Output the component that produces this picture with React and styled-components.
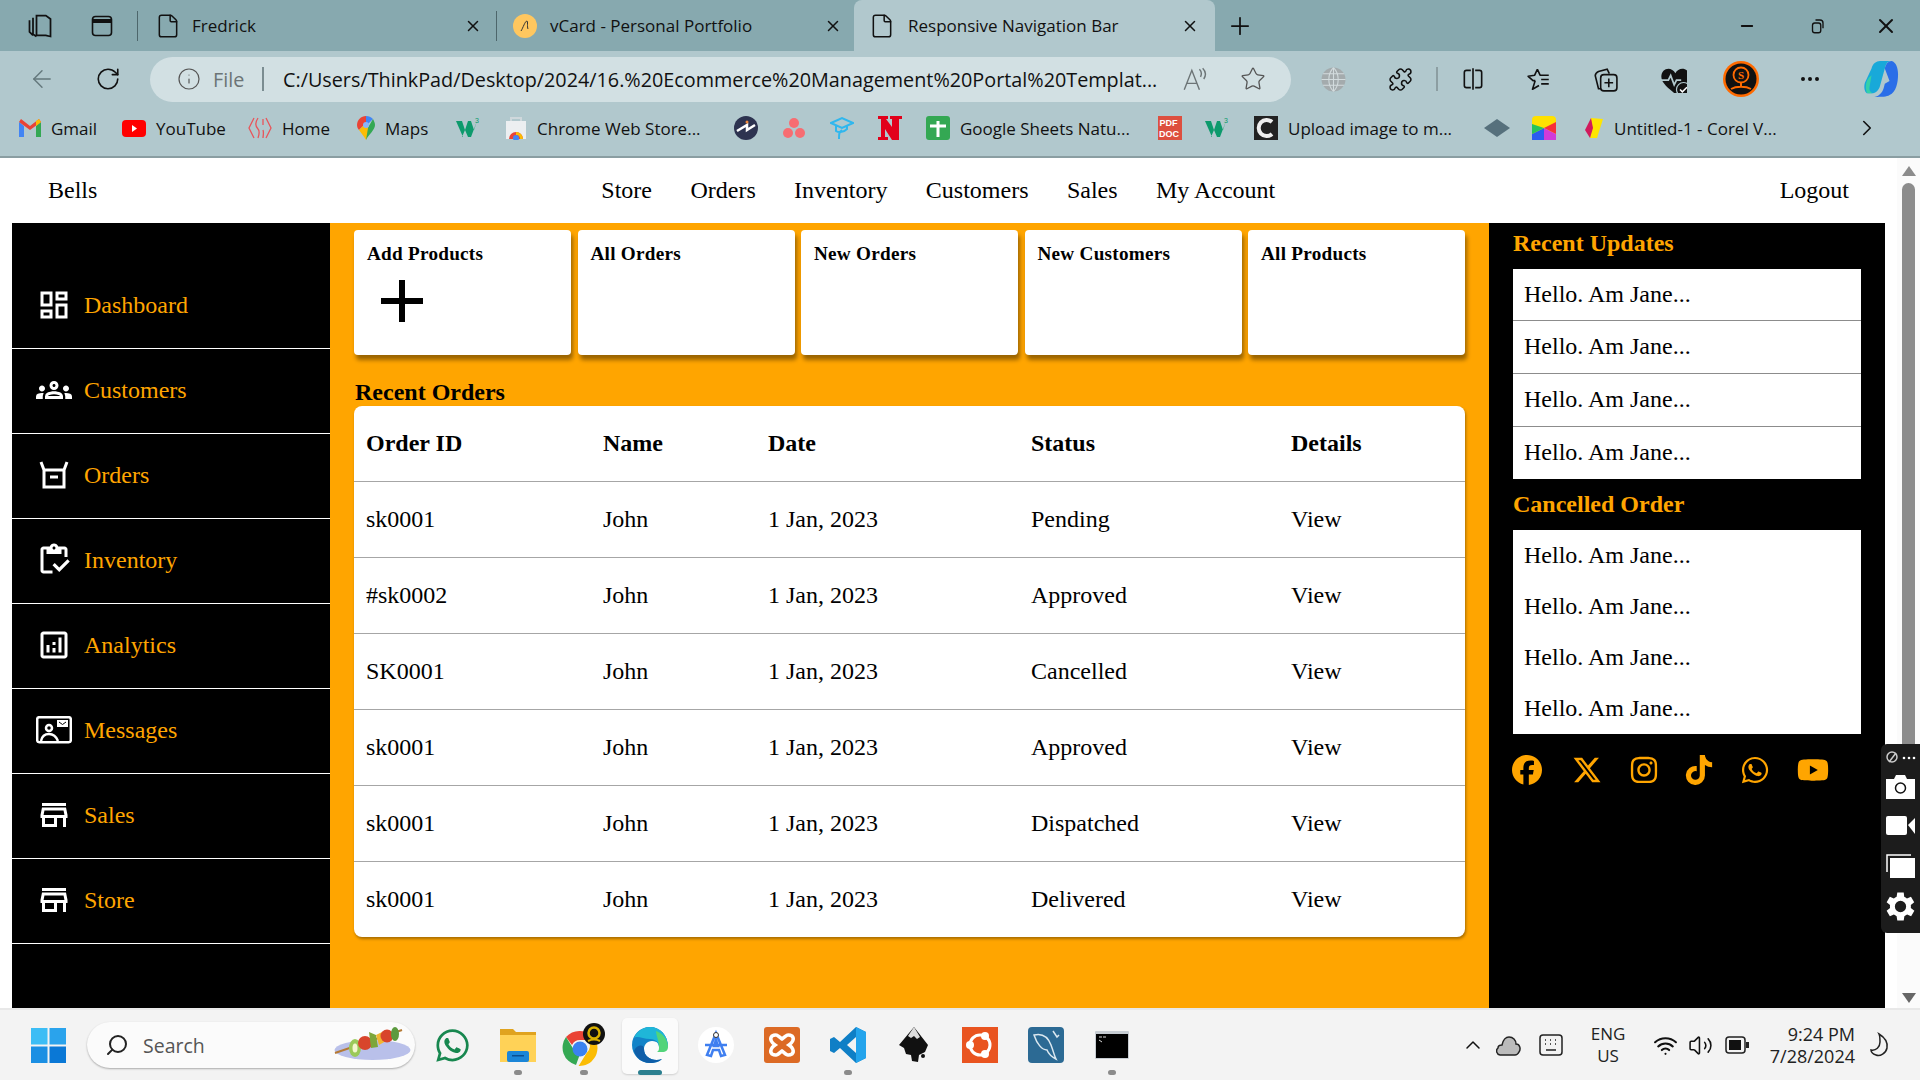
import React from "react";
import styled, { createGlobalStyle } from "styled-components";
import {
  MdOutlineDashboard,
  MdOutlineGroups,
  MdOutlineInventory,
  MdOutlineAnalytics,
  MdOutlineStore,
} from "react-icons/md";
import {
  FaFacebook,
  FaXTwitter,
  FaInstagram,
  FaTiktok,
  FaWhatsapp,
  FaYoutube,
} from "react-icons/fa6";
import {
  File,
  X,
  Plus,
  Minus,
  ArrowLeft,
  RotateCw,
  Info,
  Star,
  Puzzle,
  ChevronRight,
  ChevronUp,
  Search,
  Wifi,
  Volume2,
  Ellipsis,
} from "lucide-react";

const GlobalStyle = createGlobalStyle`
  html, body {
    margin: 0;
    height: 100%;
    overflow: hidden;
  }
  * {
    box-sizing: border-box;
  }
`;

const Window = styled.div`
  height: 1080px;
  display: flex;
  flex-direction: column;
  font-family: "Open Sans", "Noto Sans", sans-serif;
  color: #111;
`;

const TabStrip = styled.div`
  height: 51px;
  flex: none;
  display: flex;
  align-items: stretch;
  background: #87a9af;
`;

const Cell = styled.div`
  width: ${(p) => p.$w}px;
  margin-left: ${(p) => p.$ml || 0}px;
  flex: none;
  display: flex;
  align-items: center;
  justify-content: center;
  position: relative;
`;

const Divider = styled.div`
  width: 1px;
  height: 30px;
  align-self: center;
  flex: none;
  margin-left: ${(p) => p.$ml || 0}px;
  background: #4d666b;
`;

const Tab = styled.div`
  width: ${(p) => p.$w}px;
  margin-left: ${(p) => p.$ml || 0}px;
  flex: none;
  display: flex;
  align-items: center;
  padding: 0 ${(p) => p.$pr}px 0 15px;
  gap: ${(p) => p.$gap}px;
  font-size: 17px;
  background: ${(p) => (p.$active ? "#b1c8cd" : "transparent")};
  border-radius: ${(p) => (p.$active ? "8px 8px 0 0" : "0")};
`;

const TabTitle = styled.span`
  flex: 1;
  white-space: nowrap;
`;

const WindowControls = styled.div`
  margin-left: auto;
  display: flex;
`;

const Toolbar = styled.div`
  height: 56px;
  flex: none;
  display: flex;
  align-items: center;
  background: #b1c8cd;
`;

const AddressBar = styled.div`
  width: 1141px;
  height: 45px;
  margin-left: 18px;
  flex: none;
  display: flex;
  align-items: center;
  background: #d2e0e3;
  border-radius: 23px;
  font-size: 19.8px;
`;

const FileLabel = styled.span`
  width: 33px;
  color: #6c7476;
  margin-left: 2px;
`;

const UrlText = styled.span`
  width: 880px;
  margin-left: 19px;
  white-space: nowrap;
  overflow: hidden;
`;

const BarSep = styled.div`
  width: 2px;
  height: 24px;
  margin-left: ${(p) => p.$ml || 0}px;
  background: ${(p) => p.$color || "#7b8d91"};
  flex: none;
`;

const BookmarkBar = styled.div`
  height: 51px;
  flex: none;
  display: flex;
  align-items: center;
  padding: 0 0 7px 19px;
  background: #b1c8cd;
  border-bottom: 2px solid #8a9ea2;
  font-size: 17px;
`;

const Bookmark = styled.div`
  width: ${(p) => p.$w}px;
  flex: none;
  display: flex;
  align-items: center;
  gap: 10px;
  white-space: nowrap;
`;

const Page = styled.div`
  flex: 1;
  min-height: 0;
  display: flex;
  position: relative;
  background: #fff;
`;

const PageBody = styled.div`
  flex: 1;
  min-width: 0;
  display: flex;
  flex-direction: column;
  font-family: "Liberation Serif", "Times New Roman", serif;
  font-size: 24px;
`;

const NavBar = styled.nav`
  height: 65px;
  flex: none;
  display: flex;
  align-items: center;
  padding: 0 48px;
  color: #000;
`;

const NavLinks = styled.div`
  display: flex;
  gap: 38.4px;
  margin-left: 504px;
`;

const NavRight = styled.div`
  margin-left: auto;
`;

const Columns = styled.div`
  flex: 1;
  min-height: 0;
  display: flex;
  padding: 0 12px;
`;

const Sidebar = styled.aside`
  width: 318px;
  flex: none;
  background: #000;
  padding-top: 41px;
`;

const SideItem = styled.div`
  height: 85px;
  display: flex;
  align-items: center;
  padding: 0 0 2px 24px;
  gap: 12px;
  color: #ffa500;
  border-bottom: 1px solid #fff;
`;

const SideIcon = styled.span`
  width: 36px;
  height: 36px;
  display: flex;
  align-items: center;
  justify-content: center;
  color: #fff;
  font-size: 36px;
`;

const Main = styled.main`
  width: 1159px;
  flex: none;
  background: #ffa500;
  padding: 7px 24px 0;
`;

const CardRow = styled.div`
  display: grid;
  grid-template-columns: repeat(5, 1fr);
  gap: 6.5px;
`;

const Card = styled.div`
  height: 125px;
  background: #fff;
  border-radius: 4px;
  box-shadow: 2px 5px 4px rgba(0, 0, 0, 0.4);
  padding: 13px 13px;
  color: #000;
`;

const CardTitle = styled.div`
  font-size: 19.2px;
  font-weight: bold;
  line-height: 22px;
  letter-spacing: 0.25px;
`;

const PlusMark = styled.svg`
  display: block;
  margin: 15px 0 0 14px;
`;

const SectionTitle = styled.h2`
  margin: 24px 0 0 1px;
  height: 27px;
  line-height: 27px;
  font-size: 24px;
  font-weight: bold;
  color: #000;
`;

const OrderTable = styled.table`
  width: 100%;
  table-layout: fixed;
  border-collapse: collapse;
  background: #fff;
  border-radius: 8px;
  overflow: hidden;
  box-shadow: 1px 2px 3px rgba(0, 0, 0, 0.35);
  color: #000;
  th,
  td {
    text-align: left;
    padding: 0 0 0 12px;
    font-size: 24px;
  }
  th {
    height: 75px;
    font-weight: bold;
  }
  td {
    height: 76px;
  }
  tbody tr {
    border-top: 1px solid #a6a6a6;
  }
`;

const RightPanel = styled.aside`
  width: 396px;
  flex: none;
  background: #000;
  padding: 7px 24px 0;
`;

const PanelTitle = styled.h3`
  margin: 0 0 12px;
  height: 27px;
  line-height: 27px;
  font-size: 24px;
  font-weight: bold;
  color: #ffa500;
`;

const UpdateList = styled.div`
  background: #fff;
  margin-bottom: ${(p) => p.$mb}px;
`;

const UpdateRow = styled.div`
  height: ${(p) => p.$h}px;
  display: flex;
  align-items: center;
  padding: 0 0 ${(p) => (p.$line ? 1 : 0)}px 11px;
  color: #000;
  border-top: ${(p) => (p.$line ? "1px solid #8c8c8c" : "none")};
`;

const SocialRow = styled.div`
  display: flex;
  align-items: center;
  height: 30px;
  margin: 21px 0 0 -1px;
  color: #ffa500;
`;

const SocialCell = styled.span`
  width: ${(p) => p.$w}px;
  flex: none;
  display: flex;
  font-size: ${(p) => p.$size || 30}px;
`;

const ScrollTrack = styled.div`
  width: 23px;
  flex: none;
  display: flex;
  flex-direction: column;
  align-items: center;
  background: #fbfbfb;
`;

const ScrollArrow = styled.div`
  width: 0;
  height: 0;
  flex: none;
  margin-top: ${(p) => p.$mt}px;
  border-left: 7px solid transparent;
  border-right: 7px solid transparent;
  border-bottom: ${(p) => (p.$down ? "none" : "10px solid #8c8c8c")};
  border-top: ${(p) => (p.$down ? "10px solid #666" : "none")};
`;

const ScrollThumb = styled.div`
  width: 13px;
  height: 600px;
  flex: none;
  margin-top: 7px;
  background: #8c8c8c;
  border-radius: 7px 7px 0 0;
`;

const CaptureWidget = styled.div`
  position: absolute;
  right: 0;
  top: 586px;
  width: 39px;
  height: 189px;
  background: #1c1c1c;
  border-radius: 6px 0 0 6px;
  display: flex;
  flex-direction: column;
  align-items: center;
  padding-top: 6px;
`;

const WidgetIcon = styled.span`
  display: flex;
  margin-top: ${(p) => p.$mt || 0}px;
`;

const Taskbar = styled.div`
  height: 72px;
  flex: none;
  display: flex;
  align-items: center;
  padding-left: 31px;
  background: #f3f3f3;
  border-top: 2px solid #e8e8e8;
`;

const SearchPill = styled.div`
  width: 328px;
  height: 46px;
  margin-left: 21px;
  flex: none;
  display: flex;
  align-items: center;
  padding: 0 3px 0 18px;
  gap: 14px;
  background: #fbfbfb;
  border-radius: 23px;
  box-shadow: 0 1px 2px rgba(0, 0, 0, 0.3);
  color: #555;
  font-size: 19.5px;
`;

const SearchGlyph = styled(Search)`
  transform: scaleX(-1);
  color: #222;
`;

const SearchWord = styled.span`
  flex: 1;
`;

const TaskIcons = styled.div`
  display: flex;
  margin-left: 4px;
  height: 100%;
`;

const TaskIcon = styled.div`
  width: 66px;
  position: relative;
  display: flex;
  align-items: center;
  justify-content: center;
  &::before {
    content: "";
    position: absolute;
    left: 5px;
    right: 5px;
    top: 8px;
    bottom: 6px;
    border-radius: 5px;
    background: ${(p) => (p.$active ? "#fbfbfb" : "transparent")};
    box-shadow: ${(p) => (p.$active ? "0 1px 2px rgba(0,0,0,.15)" : "none")};
  }
  & > svg {
    position: relative;
  }
`;

const RunDot = styled.span`
  position: absolute;
  left: 50%;
  bottom: 5px;
  height: 5px;
  width: ${(p) => (p.$active ? 24 : 8)}px;
  margin-left: ${(p) => (p.$active ? -12 : -4)}px;
  border-radius: 3px;
  background: ${(p) => (p.$active ? "#2b7f8f" : "#8b8b8b")};
`;

const Tray = styled.div`
  margin-left: auto;
  margin-right: 15px;
  display: flex;
  align-items: center;
  height: 100%;
`;

const TrayText = styled.div`
  width: ${(p) => p.$w}px;
  flex: none;
  font-size: ${(p) => p.$size}px;
  line-height: 22px;
  text-align: ${(p) => p.$align};
  color: #222;
  white-space: nowrap;
`;

const Svg = ({ s = 24, w, h, vb = "0 0 24 24", children, ...rest }) => (
  <svg width={w || s} height={h || s} viewBox={vb} fill="none" {...rest}>
    {children}
  </svg>
);

const sidebarItems = [
  { label: "Dashboard", icon: <MdOutlineDashboard /> },
  { label: "Customers", icon: <MdOutlineGroups /> },
  {
    label: "Orders",
    icon: (
      <Svg s={30} vb="0 0 30 30" stroke="#fff" strokeWidth="3">
        <path d="M2 2l3 8h20l3-8M5 10v17h20V10M11 17h8" />
      </Svg>
    ),
  },
  { label: "Inventory", icon: <MdOutlineInventory /> },
  { label: "Analytics", icon: <MdOutlineAnalytics /> },
  {
    label: "Messages",
    icon: (
      <Svg w={36} h={28} vb="0 0 36 28" stroke="#fff" strokeWidth="2.5">
        <rect x="1.2" y="1.2" width="33.6" height="25" rx="2" />
        <circle cx="13" cy="12" r="3" />
        <path d="M5 25c1-5 4-7 8-7s7 2 9 7" />
        <rect x="21" y="4" width="11" height="7" fill="#fff" stroke="none" />
        <path d="M23 6l3.5 2.5L30 6" stroke="#000" strokeWidth="1" />
      </Svg>
    ),
  },
  { label: "Sales", icon: <MdOutlineStore /> },
  { label: "Store", icon: <MdOutlineStore /> },
];

const orders = [
  ["sk0001", "John", "1 Jan, 2023", "Pending", "View"],
  ["#sk0002", "John", "1 Jan, 2023", "Approved", "View"],
  ["SK0001", "John", "1 Jan, 2023", "Cancelled", "View"],
  ["sk0001", "John", "1 Jan, 2023", "Approved", "View"],
  ["sk0001", "John", "1 Jan, 2023", "Dispatched", "View"],
  ["sk0001", "John", "1 Jan, 2023", "Delivered", "View"],
];

const columnWidths = [237, 165, 263, 260, 186];

const cardTitles = ["Add Products", "All Orders", "New Orders", "New Customers", "All Products"];

const W3Icon = () => (
  <Svg w={25} h={22} vb="0 0 25 22">
    <path d="M0 4h6l3 9 3-9h3l3 9 3-9-6 16h-3l-3-7-3 7H7z" fill="#0d9a6c" />
    <text x="19" y="6" fontSize="7" fill="#0d9a6c" fontFamily="Liberation Sans">3</text>
  </Svg>
);

const bookmarks = [
  {
    w: 103,
    label: "Gmail",
    icon: (
      <Svg w={22} h={18} vb="0 0 22 18">
        <path d="M0 3v15h5V7z" fill="#4285f4" />
        <path d="M22 3v15h-5V7z" fill="#34a853" />
        <path d="M0 3l11 8 11-8-2-3-9 7-9-7z" fill="#ea4335" />
        <path d="M17 7l5-4-2-3-3 2z" fill="#fbbc04" />
      </Svg>
    ),
  },
  {
    w: 126,
    label: "YouTube",
    icon: (
      <Svg w={24} h={17} vb="0 0 24 17">
        <rect width="24" height="17" rx="4" fill="#f00" />
        <path d="M10 5l5 3.5-5 3.5z" fill="#fff" />
      </Svg>
    ),
  },
  {
    w: 109,
    label: "Home",
    icon: (
      <Svg stroke="#e8555a" strokeWidth="1.3">
        <path d="M6 2L1 12l5 10M18 2l5 10-5 10M10 2c-4 6-2 9 0 11s1 6 0 9M15 3v6M15 14c1 3 0 6 0 8" />
      </Svg>
    ),
  },
  {
    w: 99,
    label: "Maps",
    icon: (
      <Svg w={18} h={24} vb="0 0 18 24">
        <path d="M9 0C4 0 0 4 0 9c0 2 1 4 2 5l7-7V0z" fill="#ea4335" />
        <path d="M9 0c3 0 5 1 7 3l-7 7V0z" fill="#4285f4" />
        <path d="M16 3c1 2 2 4 2 6 0 5-6 9-9 15v-9z" fill="#34a853" />
        <path d="M2 14l7-7 2 5-2 12c-2-4-5-7-7-10z" fill="#fbbc04" />
        <circle cx="9" cy="9" r="3" fill="#8ab4f8" />
      </Svg>
    ),
  },
  { w: 49, icon: <W3Icon /> },
  {
    w: 229,
    label: "Chrome Web Store...",
    icon: (
      <Svg w={22} h={24} vb="0 0 22 24">
        <rect x="1" y="5" width="20" height="18" fill="#eceff1" />
        <path d="M6 5V2h10v3" stroke="#cfd8dc" strokeWidth="2" />
        <path d="M4 23a7 7 0 0 1 14 0z" fill="#ea4335" />
        <path d="M11 16a7 7 0 0 1 7 7h-3a4 4 0 0 0-4-4z" fill="#fbbc04" />
        <circle cx="11" cy="22" r="3" fill="#4285f4" />
      </Svg>
    ),
  },
  {
    w: 49,
    icon: (
      <Svg>
        <circle cx="12" cy="12" r="12" fill="#2d3350" />
        <path d="M3 15l10-6v5l8-5" stroke="#fff" strokeWidth="2.5" />
        <circle cx="13" cy="6" r="1.5" fill="#f28a3c" />
      </Svg>
    ),
  },
  {
    w: 47,
    icon: (
      <Svg w={22} h={22} vb="0 0 22 22">
        <circle cx="11" cy="6" r="5" fill="#f76d72" />
        <circle cx="5" cy="16" r="5" fill="#f76d72" />
        <circle cx="17" cy="16" r="5" fill="#f76d72" />
      </Svg>
    ),
  },
  {
    w: 48,
    icon: (
      <Svg stroke="#2fb7ee" strokeWidth="2">
        <path d="M1 7l11-5 11 5-11 5zM6 10v5c3 2 8 1 11-2v-3M12 14c-3 2-3 4-3 9" />
      </Svg>
    ),
  },
  {
    w: 48,
    icon: (
      <Svg>
        <path d="M0 0h10v3H8l6 8V3h-2V0h12v3h-3v21h-7L7 13v8h3v3H0v-3h3V3H0z" fill="#e2001a" />
      </Svg>
    ),
  },
  {
    w: 232,
    label: "Google Sheets Natu...",
    icon: (
      <Svg>
        <rect width="24" height="24" rx="3" fill="#34a853" />
        <path d="M12 5v16M4 10h16" stroke="#fff" strokeWidth="3" />
      </Svg>
    ),
  },
  {
    w: 47,
    icon: (
      <Svg>
        <rect width="24" height="24" fill="#dd4f3f" />
        <text x="1.5" y="10" fontSize="9" fontWeight="bold" fill="#fff" fontFamily="Liberation Sans">PDF</text>
        <text x="1" y="21" fontSize="9" fontWeight="bold" fill="#fff" fontFamily="Liberation Sans">DOC</text>
      </Svg>
    ),
  },
  { w: 49, icon: <W3Icon /> },
  {
    w: 230,
    label: "Upload image to m...",
    icon: (
      <Svg>
        <rect width="24" height="24" fill="#222" />
        <path d="M18 6a8 8 0 1 0 0 12" stroke="#eee" strokeWidth="4" />
      </Svg>
    ),
  },
  {
    w: 48,
    icon: (
      <Svg w={26} h={18} vb="0 0 26 18">
        <path d="M13 0l13 9-13 9L0 9z" fill="#56707c" />
      </Svg>
    ),
  },
  {
    w: 51,
    icon: (
      <Svg>
        <rect width="24" height="24" rx="4" fill="#ffe100" />
        <path d="M12 12L24 6v12z" fill="#f7303a" />
        <path d="M12 12l12 6v6H12z" fill="#d03bd9" />
        <path d="M12 12v12H0v-6z" fill="#2c5cf0" />
        <path d="M12 12L0 18V8z" fill="#28c45a" />
      </Svg>
    ),
  },
  {
    w: 271,
    label: "Untitled-1 - Corel V...",
    icon: (
      <Svg w={21} h={24} vb="0 0 19 24">
        <path d="M7 2l12 1-6 19H6z" fill="#ffe600" />
        <path d="M7 2L1 14l5 8 3-10z" fill="#d11a5c" />
      </Svg>
    ),
  },
];

const WinLogo = () => (
  <Svg w={35} h={35} vb="0 0 35 35">
    <rect width="16.5" height="16.5" fill="#3cbdf5" />
    <rect x="18.5" width="16.5" height="16.5" fill="#2aa3ec" />
    <rect y="18.5" width="16.5" height="16.5" fill="#1b8fe3" />
    <rect x="18.5" y="18.5" width="16.5" height="16.5" fill="#0a78d6" />
  </Svg>
);

const Kebab = () => (
  <Svg w={78} h={36} vb="0 0 78 36">
    <ellipse cx="38.5" cy="23" rx="38" ry="10" fill="#b9c0ea" />
    <path d="M1 26L68 3" stroke="#b57a35" strokeWidth="2" />
    <ellipse cx="21" cy="21" rx="6" ry="9" fill="#9bc95a" />
    <ellipse cx="21" cy="21" rx="2.5" ry="4.5" fill="#f4f6d0" />
    <circle cx="31" cy="16" r="7" fill="#d8452c" />
    <path d="M35 5l7 3 2 12-7 1z" fill="#7da63a" />
    <path d="M42 8l6-3 4 9-7 4z" fill="#f2b632" />
    <circle cx="53" cy="9" r="6.5" fill="#d8452c" />
    <ellipse cx="61" cy="7" rx="4" ry="7" fill="#5c9a3e" />
  </Svg>
);

const taskIcons = [
  { icon: <FaWhatsapp size={37} color="#17874f" /> },
  {
    dot: true,
    icon: (
      <Svg s={36} vb="0 0 36 36">
        <path d="M0 2h13l3 3h20v30H0z" fill="#e0a31f" />
        <path d="M0 8h36v27H0z" fill="#ffd257" />
        <rect x="7" y="24" width="22" height="11" rx="2" fill="#1b86d8" />
        <rect x="12" y="28" width="12" height="1.5" fill="#0b4f91" />
      </Svg>
    ),
  },
  {
    dot: true,
    icon: (
      <Svg w={44} h={44} vb="0 0 44 44">
        <path d="M18 8a18 18 0 0 1 15.6 9H18a9 9 0 0 0-8 5L4 14a18 18 0 0 1 14-6z" fill="#ea4335" />
        <path d="M4 14l8 13a9 9 0 0 0 6 4l-4 11A18 18 0 0 1 4 14z" fill="#34a853" />
        <path d="M33.6 17a18 18 0 0 1-17 26l8-13a9 9 0 0 0 1-13z" fill="#fbbc04" />
        <circle cx="18" cy="26" r="7.5" fill="#3b82f0" />
        <circle cx="32" cy="11" r="11" fill="#111" />
        <circle cx="32" cy="10" r="5.5" stroke="#d9b100" strokeWidth="2.5" />
        <path d="M26 18c4-2 8-2 12 0" stroke="#d9b100" strokeWidth="2" />
      </Svg>
    ),
  },
  {
    active: true,
    icon: (
      <Svg s={36} vb="0 0 36 36">
        <path d="M18 0C8 0 0 8 0 18c0 10 8 18 18 18 5 0 9-1 12-4-8 3-18-1-18-10 0-4 3-8 8-8 6 0 7 4 7 6h9C36 8 28 0 18 0z" fill="#1283c8" />
        <path d="M2 11C5 4 11 0 18 0c10 0 18 8 18 20h-9c0-4-3-8-9-8-7 0-13-4-16-1z" fill="#1fb6d8" />
        <path d="M24 4c6 2 12 8 12 16 0 3-2 5-6 5h-5c2-1 2-3 2-5 0-6-3-12-3-16z" fill="#52d47a" />
        <path d="M12 22c0 9 10 13 18 10-2 2-7 4-12 4-8 0-14-5-16-12 2-6 10-8 10-2z" fill="#0f5ea8" />
      </Svg>
    ),
  },
  {
    icon: (
      <Svg s={36} vb="0 0 36 36">
        <circle cx="18" cy="18" r="18" fill="#fff" />
        <path d="M18 6l-9 22 4 1 2-6h6l2 6 4-1zM16 19l2-6 2 6zM7 18h22" stroke="#3f7ff0" strokeWidth="2.5" />
        <circle cx="18" cy="8" r="2.5" fill="#fff" stroke="#333" />
      </Svg>
    ),
  },
  {
    icon: (
      <Svg s={36} vb="0 0 36 36">
        <rect width="36" height="36" rx="3" fill="#dc6a25" />
        <path d="M8 9c5-3 7 1 10 3 3-2 5-6 10-3 3 3 0 7-3 9 3 2 6 6 3 9-5 3-7-1-10-3-3 2-5 6-10 3-3-3 0-7 3-9-3-2-6-6-3-9z" stroke="#fff" strokeWidth="3.5" />
      </Svg>
    ),
  },
  {
    dot: true,
    icon: (
      <Svg s={36} vb="0 0 36 36">
        <path d="M26 0l10 5v26l-10 5L10 21l-6 5-4-2V12l4-2 6 5z" fill="#0f7fc6" />
        <path d="M26 0l10 5v26l-10 5z" fill="#24a4ec" />
        <path d="M26 10l-9 8 9 8z" fill="#f3f3f3" />
      </Svg>
    ),
  },
  {
    icon: (
      <Svg s={36} vb="0 0 36 36">
        <path d="M18 0L3 18l5 3 2 6 5 1 1 6 6 1 1-7 6-3 3-7z" fill="#111" />
        <path d="M18 0l-6 9 3 2 3-2 3 3 3-2z" fill="#ddd" />
        <circle cx="27" cy="29" r="2" fill="#111" />
      </Svg>
    ),
  },
  {
    icon: (
      <Svg s={36} vb="0 0 36 36">
        <rect width="36" height="36" fill="#e95420" />
        <circle cx="18" cy="18" r="10" stroke="#fff" strokeWidth="3" />
        <circle cx="8" cy="18" r="4" fill="#fff" />
        <circle cx="23" cy="9" r="4" fill="#fff" />
        <circle cx="23" cy="27" r="4" fill="#fff" />
      </Svg>
    ),
  },
  {
    icon: (
      <Svg s={36} vb="0 0 36 36">
        <rect width="36" height="36" rx="4" fill="#2c6a94" />
        <path d="M6 8c8-2 14 2 17 10s3 10 5 14c-4-2-7-4-9-9-5 0-10-6-13-15zM25 4l4 6 2-2" stroke="#dbe8f0" strokeWidth="1.5" />
      </Svg>
    ),
  },
  {
    dot: true,
    icon: (
      <Svg w={34} h={28} vb="0 0 34 28">
        <rect width="34" height="28" rx="1" fill="#c6ccd2" />
        <rect x="1" y="3" width="32" height="24" fill="#000" />
        <path d="M4 6h3M8 6h3M4 9l3 2" stroke="#ddd" />
      </Svg>
    ),
  },
];

export default function App() {
  return (
    <Window>
      <GlobalStyle />
      <TabStrip>
        <Cell $w={79}>
          <Svg s={28} stroke="#111" strokeWidth="1.5">
            <path d="M9 3h8l4 3v15l-4-1-8 0zM6 5v14l3 2M3 7v10l3 3" />
          </Svg>
        </Cell>
        <Cell $w={46}>
          <Svg s={24} stroke="#111" strokeWidth="1.6">
            <rect x="2.5" y="2.5" width="19" height="19" rx="3" />
            <path d="M2.5 7h19" strokeWidth="4" />
          </Svg>
        </Cell>
        <Divider $ml={12} />
        <Tab $w={356} $ml={2} $pr={14} $gap={11}>
          <File size={26} strokeWidth={1.4} />
          <TabTitle>Fredrick</TabTitle>
          <X size={18} strokeWidth={2} />
        </Tab>
        <Divider />
        <Tab $w={354} $ml={1} $pr={10} $gap={13}>
          <Svg s={24}>
            <circle cx="12" cy="12" r="12" fill="#ffc75f" />
            <path d="M8 17c2-3 4-10 6-10 1 0 0 6 1 8" stroke="#333" strokeWidth="1" />
          </Svg>
          <TabTitle>vCard - Personal Portfolio</TabTitle>
          <X size={18} strokeWidth={2} />
        </Tab>
        <Tab $w={361} $ml={2} $pr={16} $gap={13} $active>
          <File size={26} strokeWidth={1.4} />
          <TabTitle>Responsive Navigation Bar</TabTitle>
          <X size={18} strokeWidth={2} />
        </Tab>
        <Cell $w={50}>
          <Plus size={28} strokeWidth={1.5} />
        </Cell>
        <WindowControls>
          <Cell $w={70}><Minus size={18} strokeWidth={2.4} /></Cell>
          <Cell $w={70}>
            <Svg s={18} stroke="#111" strokeWidth="1.8">
              <rect x="6" y="8" width="11" height="13" rx="3" />
              <path d="M10 4h6a4 4 0 0 1 4 4v7" />
            </Svg>
          </Cell>
          <Cell $w={68}><X size={24} strokeWidth={2} /></Cell>
        </WindowControls>
      </TabStrip>
      <Toolbar>
        <Cell $w={84}><ArrowLeft size={28} strokeWidth={1.2} color="#63777b" /></Cell>
        <Cell $w={48}><RotateCw size={26} strokeWidth={1.5} /></Cell>
        <AddressBar>
          <Cell $w={28} $ml={25}><Info size={24} strokeWidth={1.2} color="#555" /></Cell>
          <Cell $w={8} />
          <FileLabel>File</FileLabel>
          <BarSep $ml={16} />
          <UrlText>C:/Users/ThinkPad/Desktop/2024/16.%20Ecommerce%20Management%20Portal%20Templat...</UrlText>
          <Cell $w={28} $ml={17}>
            <Svg s={26} stroke="#6c7476" strokeWidth="1.3">
              <path d="M3 22L10 4l7 18M5.5 16h9M17 3c2 2 2 5 1 7M20 2c3 3 3 7 1 10" />
            </Svg>
          </Cell>
          <Cell $w={28} $ml={31}><Star size={26} strokeWidth={1.2} color="#555" /></Cell>
        </AddressBar>
        <Cell $w={67} $ml={9}>
          <Svg s={25}>
            <circle cx="12" cy="12" r="11.5" fill="#a4abad" />
            <path d="M.5 12h23M2 6.5h20M2 17.5h20M12 .5v23M12 .5c-6 6-6 17 0 23M12 .5c6 6 6 17 0 23" stroke="#d3dcde" strokeWidth="1" />
          </Svg>
        </Cell>
        <Cell $w={67}><Puzzle size={25} strokeWidth={1.5} /></Cell>
        <BarSep $color="#8c9ea2" $ml={2} />
        <Cell $w={67} $ml={1}>
          <Svg s={26} stroke="#111" strokeWidth="1.5">
            <path d="M10 4H6a2 2 0 0 0-2 2v12a2 2 0 0 0 2 2h4M14 4h4a2 2 0 0 1 2 2v12a2 2 0 0 1-2 2h-4M12 2v20" />
          </Svg>
        </Cell>
        <Cell $w={65}>
          <Svg s={26} stroke="#111" strokeWidth="1.5" strokeLinejoin="round">
            <path d="M10.5 3L13 8.5h8M14 12.5h7M14 16.5h7M8.5 13.5L6 21.5l6-3.5M10.500 3L8 8.500l-6 1 4.500 4h2" />
          </Svg>
        </Cell>
        <Cell $w={68}>
          <Svg s={26} stroke="#111" strokeWidth="1.5">
            <rect x="8" y="8" width="15" height="15" rx="3" />
            <path d="M15.5 11.5v8M11.5 15.5h8M8 21H6l-3-12c0-2 1-3 3-4l8-2 2 4" />
          </Svg>
        </Cell>
        <Cell $w={68}>
          <Svg s={28}>
            <path d="M14 7c3-6 12-5 12 3 0 6-8 11-12 15C10 21 2 16 2 10c0-8 9-9 12-3z" fill="#111" />
            <path d="M1 13h7l2-4 3 8 2-4h4" stroke="#b1c8cd" strokeWidth="1.5" />
            <circle cx="21" cy="21" r="6" fill="#111" stroke="#b1c8cd" />
            <path d="M18 21l2 2 4-4" stroke="#fff" strokeWidth="1.3" />
          </Svg>
        </Cell>
        <Cell $w={68}>
          <Svg s={36} vb="0 0 36 36">
            <circle cx="18" cy="18" r="18" fill="#ff6a00" />
            <circle cx="18" cy="18" r="15.5" fill="#111" />
            <circle cx="18" cy="14" r="7.5" stroke="#ff6a00" strokeWidth="1.8" />
            <text x="15" y="18" fontSize="11" fontWeight="bold" fill="#ff6a00" fontFamily="Liberation Serif">S</text>
            <path d="M8 28c5-3 15-3 20 0M18 22v4" stroke="#ff6a00" strokeWidth="2" />
          </Svg>
        </Cell>
        <Cell $w={70}><Ellipsis size={24} strokeWidth={2} /></Cell>
        <Cell $w={72}>
          <Svg w={36} h={36} vb="0 0 36 38">
            <path d="M8 8c1-5 5-8 9-8h11c-4 1-5 4-6 8l-5 18c-1 4-4 8-9 8H3c-3-2-3-8-2-11z" fill="#18a9d9" />
            <path d="M22 8c1-4 3-8 7-8 5 1 7 8 7 14 0 9-2 19-9 22-3 2-8 2-16 2 6-1 9-6 10-10l1-4 5-3z" fill="#2a6ee8" />
            <path d="M2 27c0-5 2-9 6-12l-2 12c-1 4 1 6 3 7H4c-1 0-2-3-2-7z" fill="#35d0a8" />
          </Svg>
        </Cell>
      </Toolbar>
      <BookmarkBar>
        {bookmarks.map((b, i) => (
          <Bookmark key={i} $w={b.w}>
            {b.icon}
            {b.label && <span>{b.label}</span>}
          </Bookmark>
        ))}
        <ChevronRight size={26} strokeWidth={1.5} />
      </BookmarkBar>
      <Page>
        <PageBody>
          <NavBar>
            <span>Bells</span>
            <NavLinks>
              <span>Store</span>
              <span>Orders</span>
              <span>Inventory</span>
              <span>Customers</span>
              <span>Sales</span>
              <span>My Account</span>
            </NavLinks>
            <NavRight>Logout</NavRight>
          </NavBar>
          <Columns>
            <Sidebar>
              {sidebarItems.map((item) => (
                <SideItem key={item.label}>
                  <SideIcon>{item.icon}</SideIcon>
                  <span>{item.label}</span>
                </SideItem>
              ))}
            </Sidebar>
            <Main>
              <CardRow>
                {cardTitles.map((title, i) => (
                  <Card key={title}>
                    <CardTitle>{title}</CardTitle>
                    {i === 0 && (
                      <PlusMark width="42" height="42" viewBox="0 0 42 42">
                        <path d="M21 0v42M0 21h42" stroke="#000" strokeWidth="6" />
                      </PlusMark>
                    )}
                  </Card>
                ))}
              </CardRow>
              <SectionTitle>Recent Orders</SectionTitle>
              <OrderTable>
                <colgroup>
                  {columnWidths.map((w) => (
                    <col key={w} width={w} />
                  ))}
                </colgroup>
                <thead>
                  <tr>
                    <th>Order ID</th>
                    <th>Name</th>
                    <th>Date</th>
                    <th>Status</th>
                    <th>Details</th>
                  </tr>
                </thead>
                <tbody>
                  {orders.map((row, i) => (
                    <tr key={i}>
                      {row.map((cell, j) => (
                        <td key={j}>{cell}</td>
                      ))}
                    </tr>
                  ))}
                </tbody>
              </OrderTable>
            </Main>
            <RightPanel>
              <PanelTitle>Recent Updates</PanelTitle>
              <UpdateList $mb={12}>
                {[0, 1, 2, 3].map((i) => (
                  <UpdateRow key={i} $h={i === 0 ? 51 : 53} $line={i > 0}>Hello. Am Jane...</UpdateRow>
                ))}
              </UpdateList>
              <PanelTitle>Cancelled Order</PanelTitle>
              <UpdateList $mb={0}>
                {[0, 1, 2, 3].map((i) => (
                  <UpdateRow key={i} $h={51}>Hello. Am Jane...</UpdateRow>
                ))}
              </UpdateList>
              <SocialRow>
                <SocialCell $w={60}><FaFacebook /></SocialCell>
                <SocialCell $w={57}><FaXTwitter /></SocialCell>
                <SocialCell $w={55}><FaInstagram /></SocialCell>
                <SocialCell $w={56}><FaTiktok /></SocialCell>
                <SocialCell $w={57}><FaWhatsapp /></SocialCell>
                <SocialCell $w={34} $size={32}><FaYoutube /></SocialCell>
              </SocialRow>
            </RightPanel>
          </Columns>
        </PageBody>
        <ScrollTrack>
          <ScrollArrow $mt={8} />
          <ScrollThumb />
          <ScrollArrow $down $mt={210} />
        </ScrollTrack>
        <CaptureWidget>
          <WidgetIcon>
            <Svg w={30} h={14} vb="0 0 30 14">
              <circle cx="6" cy="7" r="5" stroke="#ccc" strokeWidth="1.5" />
              <path d="M3 12l7-9" stroke="#ccc" strokeWidth="1.5" />
              <circle cx="18" cy="8" r="1.3" fill="#fff" />
              <circle cx="23" cy="8" r="1.3" fill="#fff" />
              <circle cx="28" cy="8" r="1.3" fill="#fff" />
            </Svg>
          </WidgetIcon>
          <WidgetIcon $mt={11}>
            <Svg w={29} h={24} vb="0 0 29 24">
              <path d="M0 4h8l2-4h9l2 4h8v20H0z" fill="#fff" />
              <circle cx="14.5" cy="13" r="5" fill="#fff" stroke="#111" strokeWidth="1.5" />
            </Svg>
          </WidgetIcon>
          <WidgetIcon $mt={17}>
            <Svg w={29} h={20} vb="0 0 29 20">
              <rect width="21" height="19" rx="2" fill="#fff" />
              <path d="M22 9l7-7v16z" fill="#fff" />
            </Svg>
          </WidgetIcon>
          <WidgetIcon $mt={18}>
            <Svg w={29} h={24} vb="0 0 29 24">
              <path d="M1 18V1h24" stroke="#fff" strokeWidth="1.5" />
              <rect x="4" y="4" width="25" height="20" fill="#fff" />
            </Svg>
          </WidgetIcon>
          <WidgetIcon $mt={14}>
            <Svg s={29} vb="4 3 18 18">
              <path
                fill="#fff"
                d="M19.4 13a7.6 7.6 0 0 0 0-2l2.1-1.6-2-3.4-2.5 1a7.6 7.6 0 0 0-1.7-1L15 3.3h-4l-.4 2.7a7.6 7.6 0 0 0-1.7 1l-2.5-1-2 3.4L6.5 11a7.6 7.6 0 0 0 0 2l-2.1 1.6 2 3.4 2.5-1c.5.4 1.1.7 1.7 1l.4 2.7h4l.4-2.7c.6-.3 1.2-.6 1.7-1l2.5 1 2-3.400zM13 15.500a3.500 3.500 0 1 1 0-7 3.500 3.500 0 0 1 0 7z"
              />
            </Svg>
          </WidgetIcon>
        </CaptureWidget>
      </Page>
      <Taskbar>
        <WinLogo />
        <SearchPill>
          <SearchGlyph size={24} strokeWidth={2} />
          <SearchWord>Search</SearchWord>
          <Kebab />
        </SearchPill>
        <TaskIcons>
          {taskIcons.map((t, i) => (
            <TaskIcon key={i} $active={t.active}>
              {t.icon}
              {(t.dot || t.active) && <RunDot $active={t.active} />}
            </TaskIcon>
          ))}
        </TaskIcons>
        <Tray>
          <Cell $w={36}><ChevronUp size={24} strokeWidth={1.5} /></Cell>
          <Cell $w={36}>
            <Svg w={26} h={24} vb="0 0 26 24">
              <path d="M4 22a4 4 0 0 1-2-7c0-2 2-3 4-3 1-5 4-8 7-8 4 0 7 3 7 7 4 0 5 5 3 8-1 2-2 3-4 3z" fill="#bbb" stroke="#222" strokeWidth="1.5" />
            </Svg>
          </Cell>
          <Cell $w={48}>
            <Svg w={24} h={24} stroke="#222" strokeWidth="1.5">
              <rect x="1" y="2" width="22" height="20" rx="3" />
              <path d="M6 7h1M11 7h1M16 7h1M6 11h1M11 11h1M16 11h1M7 17h10" />
            </Svg>
          </Cell>
          <TrayText $w={66} $align="center" $size={17}>ENG<br />US</TrayText>
          <Cell $w={42} $ml={3}><Wifi size={25} strokeWidth={2} /></Cell>
          <Cell $w={28}><Volume2 size={25} strokeWidth={1.5} /></Cell>
          <Cell $w={46}>
            <Svg w={24} h={20} vb="0 0 24 20">
              <rect x="1" y="2" width="19" height="16" rx="3" stroke="#222" strokeWidth="1.5" />
              <rect x="4" y="5" width="12" height="10" fill="#111" />
              <rect x="21" y="7" width="3" height="6" fill="#222" />
            </Svg>
          </Cell>
          <TrayText $w={95} $align="right" $size={18}>9:24 PM<br />7/28/2024</TrayText>
          <Cell $w={50}>
            <Svg w={20} h={26} vb="0 0 20 26" stroke="#222" strokeWidth="1.5">
              <path d="M9 2c5 3 9 8 8 14-1 5-7 9-11 7-3-1-5-3-5-5 5 1 9-3 9-8 0-3 0-6-1-8z" />
            </Svg>
          </Cell>
        </Tray>
      </Taskbar>
    </Window>
  );
}
